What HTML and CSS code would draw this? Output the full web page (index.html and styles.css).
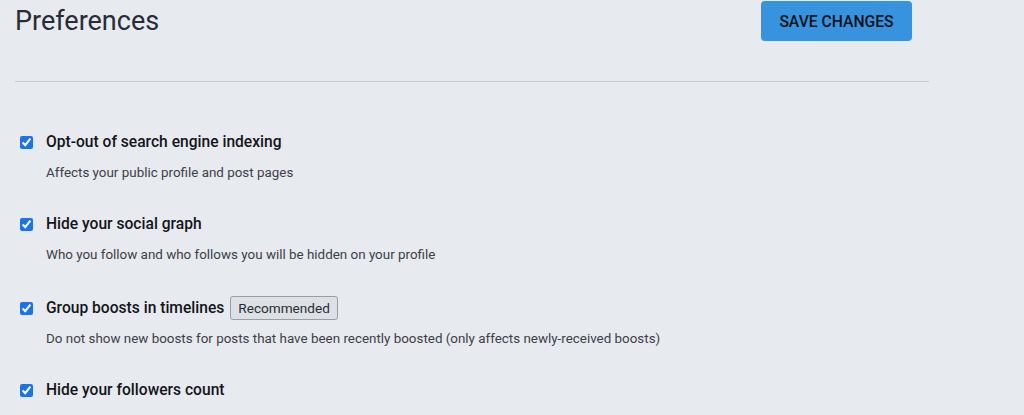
FILE: index.html
```html
<!DOCTYPE html>
<html>
<head>
<meta charset="utf-8">
<link rel="stylesheet" href="styles.css">
</head>
<body>
<div class="page">
  <div class="header">
    <h1 class="title">Preferences</h1>
    <button class="save">SAVE CHANGES</button>
  </div>
  <hr class="rule">
  <div class="list">
    <div class="item">
      <label class="row"><input type="checkbox" checked class="cb"><span class="label">Opt-out of search engine indexing</span></label>
      <div class="desc">Affects your public profile and post pages</div>
    </div>
    <div class="item">
      <label class="row"><input type="checkbox" checked class="cb"><span class="label">Hide your social graph</span></label>
      <div class="desc">Who you follow and who follows you will be hidden on your profile</div>
    </div>
    <div class="item item-badge">
      <label class="row"><input type="checkbox" checked class="cb"><span class="label">Group boosts in timelines</span><span class="badge">Recommended</span></label>
      <div class="desc">Do not show new boosts for posts that have been recently boosted (only affects newly-received boosts)</div>
    </div>
    <div class="item">
      <label class="row"><input type="checkbox" checked class="cb"><span class="label">Hide your followers count</span></label>
    </div>
  </div>
</div>
</body>
</html>
```

FILE: styles.css
```css
html, body {
  margin: 0;
  padding: 0;
  background: #e7eaef;
  font-family: Roboto, "Liberation Sans", sans-serif;
  color: #16181d;
}
.page {
  width: 914px;
  margin-left: 15px;
}
.header {
  display: flex;
  justify-content: space-between;
  align-items: flex-start;
  height: 81px;
}
.title {
  margin: 5px 0 0 0;
  font-size: 27px;
  font-weight: 400;
  line-height: 32px;
  color: #282c37;
}
.save {
  margin: 1px 17px 0 0;
  width: 151px;
  height: 40px;
  background: #3893de;
  border: none;
  border-radius: 4px;
  font-family: Roboto, "Liberation Sans", sans-serif;
  font-size: 15.7px;
  font-weight: 500;
  color: #0f1218;
  padding: 0;
}
.rule {
  margin: 0;
  border: none;
  border-top: 1px solid #c5ccd6;
  height: 0;
}
.list {
  padding-top: 48px;
  display: flex;
  flex-direction: column;
  gap: 29px;
}
.item {
  display: flex;
  flex-direction: column;
}
.item-badge {
  margin-top: 2px;
}
.row {
  display: flex;
  align-items: center;
  height: 24px;
}
.cb {
  margin: 0 13px 0 5px;
  width: 13px;
  height: 13px;
  accent-color: #1a73e8;
}
.label {
  font-size: 15.6px;
  font-weight: 500;
  color: #141519;
}
.badge {
  margin-left: 6px;
  padding: 0 7px;
  height: 22px;
  line-height: 22px;
  font-size: 13.6px;
  font-weight: 400;
  color: #2a2d33;
  background: #dde0e5;
  border: 1px solid #999ea6;
  border-radius: 3px;
}
.desc {
  margin-top: 9px;
  margin-left: 31px;
  font-size: 13.4px;
  line-height: 20px;
  color: #3c4048;
}
```
